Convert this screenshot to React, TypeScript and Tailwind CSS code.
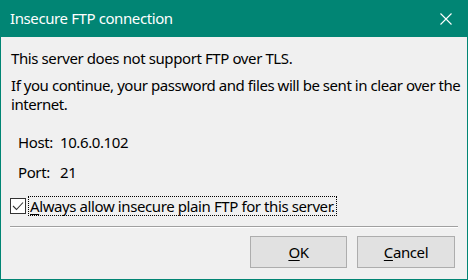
import React from "react";

export default function App() {
  const font = { fontFamily: '"Segoe UI", "Noto Sans", sans-serif' };
  return (
    <div className="w-[468px] h-[280px] flex flex-col bg-[#018574] text-[15px] leading-[20px] tracking-[-0.4px] text-black overflow-hidden" style={font}>
      <div className="h-[37px] shrink-0 flex items-center pl-[10px] text-white">
        <span className="flex-1 -mt-[1px]">Insecure FTP connection</span>
        <div className="w-[40px] h-full flex items-center justify-center mr-[2px]">
          <svg width="12" height="12" viewBox="0 0 12 12" stroke="white" strokeWidth="1.1">
            <path d="M0.5 0.5 L11.5 11.5 M11.5 0.5 L0.5 11.5" />
          </svg>
        </div>
      </div>
      <div className="flex-1 mx-[1px] mb-[1px] bg-[#f0f0f0] flex flex-col px-[9px]">
        <p className="pl-[1px] mt-[11px] whitespace-nowrap">This server does not support FTP over TLS.</p>
        <p className="pl-[1px] mt-[8px] leading-[19px] whitespace-nowrap tracking-[-0.45px]">
          If you continue, your password and files will be sent in clear over the
          <br />
          internet.
        </p>
        <div className="mt-[18px] pl-[8px] grid grid-cols-[42px_1fr] gap-y-[10px]">
          <span>Host:</span>
          <span>10.6.0.102</span>
          <span>Port:</span>
          <span>21</span>
        </div>
        <div className="mt-[14px] flex items-center">
          <div className="w-[16px] h-[16px] border border-[#333] bg-white flex items-center justify-center">
            <svg width="12" height="10" viewBox="0 0 12 10" fill="none" stroke="#333" strokeWidth="1.1">
              <path d="M1 5 L4.5 8.5 L11 1.5" />
            </svg>
          </div>
          <span className="ml-[2px] px-[1px] border border-dotted border-black leading-[18px] whitespace-nowrap">
            <span className="underline underline-offset-2">A</span>lways allow insecure plain FTP for this server.
          </span>
        </div>
        <div className="mt-[10px] h-[2px] border-t border-[#a0a0a0] border-b border-b-white" />
        <div className="mt-[8px] flex justify-end gap-[10px] pr-[3px]">
          <button className="w-[97px] h-[32px] bg-[#e1e1e1] border border-[#adadad] text-black">
            <span className="underline underline-offset-2">O</span>K
          </button>
          <button className="w-[98px] h-[32px] bg-[#e1e1e1] border border-[#adadad] text-black">
            <span className="underline underline-offset-2">C</span>ancel
          </button>
        </div>
      </div>
    </div>
  );
}
